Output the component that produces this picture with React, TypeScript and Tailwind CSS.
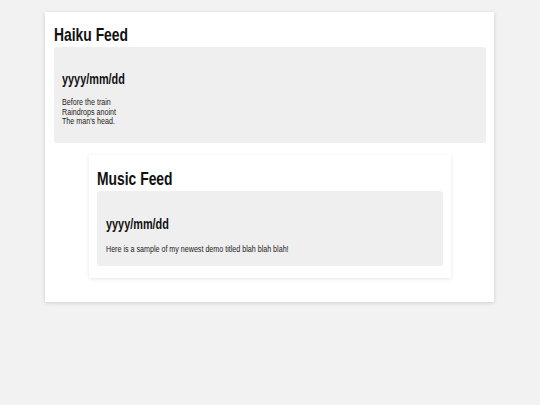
import type { ReactNode } from "react";

// the reference text is a narrow Helvetica; squeeze Liberation Sans to match
function Narrow({ children, tight }: { children: ReactNode; tight?: boolean }) {
  return (
    <span
      className={
        tight
          ? "inline-block origin-left scale-x-[0.84] whitespace-nowrap"
          : "inline-block origin-left scale-x-75 whitespace-nowrap"
      }
    >
      {children}
    </span>
  );
}

export default function App() {
  return (
    <div className="min-h-[405px] bg-[#f2f2f2] pt-3 font-['Liberation_Sans',Arial,sans-serif] text-[#111]">
      <div className="ml-[45px] w-[449px] bg-white pl-[9px] pr-[8px] pt-[11px] pb-[24px] shadow-[0_1px_4px_rgba(0,0,0,0.15)]">
        <h1 className="text-[18.5px] leading-[24px] font-bold">
          <Narrow>Haiku Feed</Narrow>
        </h1>
        <div className="rounded-[3px] bg-[#efefef] px-2 pt-[23px] pb-[16px]">
          <h2 className="text-[14.5px] leading-[18px] font-bold">
            <Narrow>yyyy/mm/dd</Narrow>
          </h2>
          <p className="mt-[10px] text-[8.5px] leading-[9.5px] text-[#222]">
            <Narrow tight>Before the train</Narrow>
            <br />
            <Narrow tight>Raindrops anoint</Narrow>
            <br />
            <Narrow tight>The man's head.</Narrow>
          </p>
        </div>
        <div className="mt-[12px] ml-[35px] w-[362px] bg-white px-2 pt-[12px] pb-[12px] shadow-[0_1px_4px_rgba(0,0,0,0.1)]">
          <h1 className="text-[18.5px] leading-[24px] font-bold">
            <Narrow>Music Feed</Narrow>
          </h1>
          <div className="rounded-[3px] bg-[#efefef] px-[9px] pt-[24px] pb-[12px]">
            <h2 className="text-[14.5px] leading-[18px] font-bold">
              <Narrow>yyyy/mm/dd</Narrow>
            </h2>
            <p className="mt-[10px] text-[9.5px] leading-[11px] text-[#222]">
              <Narrow>Here is a sample of my newest demo titled blah blah blah!</Narrow>
            </p>
          </div>
        </div>
      </div>
    </div>
  );
}
